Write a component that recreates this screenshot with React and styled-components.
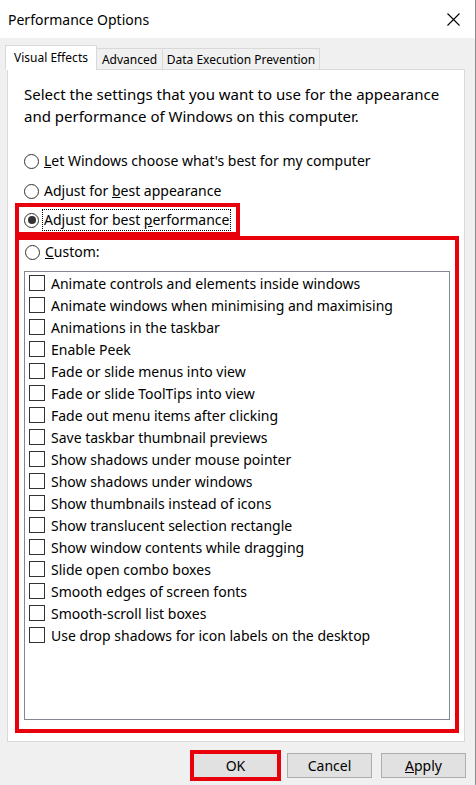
import React from "react";
import styled, { createGlobalStyle } from "styled-components";

const GlobalStyle = createGlobalStyle`
  html, body {
    margin: 0;
    padding: 0;
    background: #f0f0f0;
  }
  body {
    font-family: "Noto Sans", "Open Sans", sans-serif;
    color: #000;
  }
  * {
    box-sizing: border-box;
  }
`;

const effects = [
  "Animate controls and elements inside windows",
  "Animate windows when minimising and maximising",
  "Animations in the taskbar",
  "Enable Peek",
  "Fade or slide menus into view",
  "Fade or slide ToolTips into view",
  "Fade out menu items after clicking",
  "Save taskbar thumbnail previews",
  "Show shadows under mouse pointer",
  "Show shadows under windows",
  "Show thumbnails instead of icons",
  "Show translucent selection rectangle",
  "Show window contents while dragging",
  "Slide open combo boxes",
  "Smooth edges of screen fonts",
  "Smooth-scroll list boxes",
  "Use drop shadows for icon labels on the desktop",
];

export default function App() {
  return (
    <>
      <GlobalStyle />
      <Window>
        <TitleBar>
          <Title>Performance Options</Title>
          <CloseButton aria-label="Close">
            <svg width="13" height="13" viewBox="0 0 13 13">
              <path d="M0.5 0.5 L12.5 12.5 M12.5 0.5 L0.5 12.5" stroke="#000" strokeWidth="1.1" fill="none" />
            </svg>
          </CloseButton>
        </TitleBar>
        <Body>
          <TabStrip>
            <Tab $active $width={92}>Visual Effects</Tab>
            <Tab $width={67}>Advanced</Tab>
            <Tab $width={158}>Data Execution Prevention</Tab>
          </TabStrip>
          <Panel>
            <Intro>
              Select the settings that you want to use for the appearance
              <br />
              and performance of Windows on this computer.
            </Intro>
            <Mark $first>
              <RadioRow>
                <Radio />
                <Label>
                  <u>L</u>et Windows choose what's best for my computer
                </Label>
              </RadioRow>
            </Mark>
            <Mark>
              <RadioRow>
                <Radio />
                <Label>
                  Adjust for <u>b</u>est appearance
                </Label>
              </RadioRow>
            </Mark>
            <Mark $on $fit $pull>
              <RadioRow>
                <Radio $checked />
                <Label $focus>
                  Adjust for best <u>p</u>erformance
                </Label>
              </RadioRow>
            </Mark>
            <CustomBox>
              <CustomRow>
                <Radio />
                <Label>
                  <u>C</u>ustom:
                </Label>
              </CustomRow>
              <EffectList>
                {effects.map((e) => (
                  <EffectRow key={e}>
                    <Check />
                    <span>{e}</span>
                  </EffectRow>
                ))}
              </EffectList>
            </CustomBox>
          </Panel>
        </Body>
        <Footer>
          <DialogButton $marked>OK</DialogButton>
          <DialogButton>Cancel</DialogButton>
          <DialogButton>
            <u>A</u>pply
          </DialogButton>
        </Footer>
      </Window>
    </>
  );
}

const Window = styled.div`
  width: 476px;
  height: 785px;
  background: #f0f0f0;
  border-right: 1px solid #8c8c8c;
  display: flex;
  flex-direction: column;
  overflow: hidden;
`;

const TitleBar = styled.div`
  height: 38px;
  flex-shrink: 0;
  background: #fff;
  display: flex;
  align-items: center;
  justify-content: space-between;
  padding: 0 15px 0 8px;
`;

const Title = styled.span`
  font-size: 14px;
  margin-top: 1px;
`;

const CloseButton = styled.button`
  border: none;
  background: transparent;
  padding: 0;
  width: 13px;
  height: 13px;
  display: flex;
  margin-top: 1px;
`;

const Body = styled.div`
  padding: 7px 10px 0 7px;
  display: flex;
  flex-direction: column;
`;

const TabStrip = styled.div`
  display: flex;
  align-items: flex-end;
  height: 25px;
  margin: 0 0 -1px -2px;
  position: relative;
  z-index: 1;
`;

const Tab = styled.div`
  width: ${(p) => p.$width}px;
  height: ${(p) => (p.$active ? 25 : 22)}px;
  margin-left: ${(p) => (p.$active ? 0 : -1)}px;
  border: 1px solid #d9d9d9;
  border-bottom-color: ${(p) => (p.$active ? "#fff" : "#d9d9d9")};
  background: ${(p) => (p.$active ? "#fff" : "#f0f0f0")};
  font-size: 12px;
  display: flex;
  justify-content: center;
  align-items: ${(p) => (p.$active ? "flex-start" : "center")};
  padding-top: ${(p) => (p.$active ? 3 : 1)}px;
  white-space: nowrap;
  &:first-child {
    margin-left: 0;
  }
`;

const Panel = styled.div`
  height: 673px;
  background: #fff;
  border: 1px solid #d9d9d9;
  padding: 0 5px 0 7px;
  display: flex;
  flex-direction: column;
`;

const Intro = styled.p`
  margin: 13px 0 0 9px;
  font-size: 15px;
  line-height: 22px;
`;

const Mark = styled.div`
  border: 4px solid ${(p) => (p.$on ? "#e8000b" : "transparent")};
  width: ${(p) => (p.$fit ? "fit-content" : "auto")};
  margin-top: ${(p) => (p.$first ? 19 : p.$pull ? -3 : 0)}px;
  padding: ${(p) => (p.$on ? "2px 6px 1px 5px" : "0 0 0 5px")};
`;

const RadioRow = styled.div`
  height: 22px;
  display: flex;
  align-items: center;
  font-size: 14px;
`;

const Radio = styled.span`
  width: 15px;
  height: 15px;
  border-radius: 50%;
  border: 1px solid #333;
  background: #fff;
  flex-shrink: 0;
  display: flex;
  align-items: center;
  justify-content: center;
  &::after {
    content: "";
    width: 8px;
    height: 8px;
    border-radius: 50%;
    background: ${(p) => (p.$checked ? "#333" : "transparent")};
  }
`;

const Label = styled.span`
  margin-left: 4px;
  padding: 0 1px;
  line-height: 20px;
  outline: ${(p) => (p.$focus ? "1px dotted #000" : "none")};
  white-space: nowrap;
`;

const CustomBox = styled.div`
  border: 4px solid #e8000b;
  padding: 0 5px 9px 5px;
  display: flex;
  flex-direction: column;
`;

const CustomRow = styled(RadioRow)`
  height: 24px;
  padding-left: 1px;
`;

const EffectList = styled.div`
  margin-top: 7px;
  height: 449px;
  border: 1px solid #828790;
  padding-left: 4px;
  display: flex;
  flex-direction: column;
`;

const EffectRow = styled.div`
  height: 22px;
  display: flex;
  align-items: center;
  gap: 6px;
  font-size: 14px;
  white-space: nowrap;
`;

const Check = styled.span`
  width: 16px;
  height: 16px;
  border: 1px solid #333;
  background: #fff;
  flex-shrink: 0;
`;

const Footer = styled.div`
  display: flex;
  justify-content: flex-end;
  gap: 9px;
  padding: 11px 9px 0 0;
`;

const DialogButton = styled.button`
  width: 85px;
  height: 25px;
  background: #e1e1e1;
  border: 1px solid #adadad;
  font-family: inherit;
  font-size: 14px;
  color: #000;
  padding: 0;
  outline: ${(p) => (p.$marked ? "4px solid #e8000b" : "none")};
  outline-offset: -1px;
`;
